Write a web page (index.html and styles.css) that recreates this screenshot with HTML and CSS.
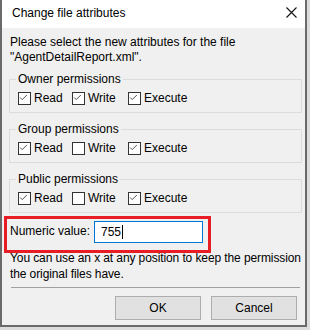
FILE: index.html
```html
<!DOCTYPE html>
<html lang="en">
<head>
    <meta charset="UTF-8">
    <title>Change file attributes</title>
    <link rel="stylesheet" href="styles.css">
</head>
<body>
    <div class="window">
        <div class="title-bar">
            <span class="title">Change file attributes</span>
            <svg class="close" width="11" height="11" viewBox="0 0 11 11">
                <path d="M0.5 0.5 L10.5 10.5 M10.5 0.5 L0.5 10.5" stroke="#111" stroke-width="1.1" fill="none"/>
            </svg>
        </div>
        <div class="content">
            <p class="intro">Please select the new attributes for the file<br>"AgentDetailReport.xml".</p>

            <!-- Owner -->
            <fieldset class="group">
                <legend>Owner permissions</legend>
                <div class="checks">
                    <label class="check"><span class="box on"><svg viewBox="0 0 13 13"><path d="M2.5 6.5 L5 9 L10.5 3.5" /></svg></span>Read</label>
                    <label class="check"><span class="box on"><svg viewBox="0 0 13 13"><path d="M2.5 6.5 L5 9 L10.5 3.5" /></svg></span>Write</label>
                    <label class="check"><span class="box on"><svg viewBox="0 0 13 13"><path d="M2.5 6.5 L5 9 L10.5 3.5" /></svg></span>Execute</label>
                </div>
            </fieldset>

            <!-- Group -->
            <fieldset class="group">
                <legend>Group permissions</legend>
                <div class="checks">
                    <label class="check"><span class="box on"><svg viewBox="0 0 13 13"><path d="M2.5 6.5 L5 9 L10.5 3.5" /></svg></span>Read</label>
                    <label class="check"><span class="box"></span>Write</label>
                    <label class="check"><span class="box on"><svg viewBox="0 0 13 13"><path d="M2.5 6.5 L5 9 L10.5 3.5" /></svg></span>Execute</label>
                </div>
            </fieldset>

            <!-- Public -->
            <fieldset class="group">
                <legend>Public permissions</legend>
                <div class="checks">
                    <label class="check"><span class="box on"><svg viewBox="0 0 13 13"><path d="M2.5 6.5 L5 9 L10.5 3.5" /></svg></span>Read</label>
                    <label class="check"><span class="box"></span>Write</label>
                    <label class="check"><span class="box on"><svg viewBox="0 0 13 13"><path d="M2.5 6.5 L5 9 L10.5 3.5" /></svg></span>Execute</label>
                </div>
            </fieldset>

            <div class="numeric">
                <span class="numeric-label">Numeric value:</span>
                <div class="numeric-input"><span class="value">755</span><span class="caret"></span></div>
            </div>

            <p class="hint">You can use an x at any position to keep the permission<br>the original files have.</p>

            <div class="separator"></div>

            <div class="buttons">
                <button class="btn">OK</button>
                <button class="btn">Cancel</button>
            </div>
        </div>
    </div>
</body>
</html>
```

FILE: styles.css
```css
body {
    margin: 0;
    padding: 0;
    background-color: #dcdcdc;
    font-family: 'Liberation Sans', Arial, sans-serif;
    font-size: 12px;
    color: #000;
}

.window {
    width: 303px;
    height: 325px;
    background-color: #f0f0f0;
    border: 2px solid #6a6a6a;
    border-top: 0;
    overflow: hidden;
}

.title-bar {
    height: 28px;
    background-color: #ffffff;
    display: flex;
    align-items: center;
    justify-content: space-between;
    padding: 0 8px 0 10px;
}

.title {
    font-size: 12px;
    line-height: 15px;
    padding-bottom: 2px;
}

.close {
    display: block;
    margin-bottom: 3px;
}

.content {
    padding: 0 3px 0 7px;
}

.intro {
    margin: 7px 0 0 1px;
    line-height: 15px;
}

.group {
    margin: 7px 0 0 0;
    padding: 0 7px 6px 8px;
    border: 1px solid #dcdcdc;
    min-width: 0;
}

.group + .group {
    margin-top: 9px;
}

.group legend {
    padding: 0 2px;
    margin-left: -2px;
    line-height: 14px;
}

.checks {
    display: grid;
    grid-template-columns: 54px 56px auto;
    margin-top: 5px;
}

.check {
    display: flex;
    align-items: center;
    line-height: 15px;
}

.box {
    width: 11px;
    height: 11px;
    border: 1px solid #333;
    background-color: #fff;
    margin-right: 3px;
    display: flex;
}

.box svg {
    width: 11px;
    height: 11px;
    margin: -1px 0 0 -1px;
    overflow: visible;
}

.box svg path {
    fill: none;
    stroke: #333;
    stroke-width: 1;
}

.numeric {
    margin: 6px 0 0 -2px;
    width: 201px;
    height: 31px;
    outline: 3px solid #e81c24;
    display: flex;
    align-items: flex-start;
}

.numeric-label {
    margin: 5px 0 0 3px;
    line-height: 15px;
    width: 84px;
}

.numeric-input {
    margin-top: 2px;
    background-color: #fff;
    border: 1px solid #0078d7;
    display: flex;
    align-items: center;
    padding-left: 6px;
    box-sizing: border-box;
    width: 109px;
    height: 22px;
}

.caret {
    width: 1px;
    height: 14px;
    background-color: #000;
    margin-left: 1px;
}

.hint {
    margin: 0 0 0 1px;
    line-height: 16px;
    white-space: nowrap;
    letter-spacing: -0.1px;
}

.separator {
    margin: 5px 2px 0 2px;
    border-top: 1px solid #a0a0a0;
}

.buttons {
    display: flex;
    justify-content: flex-end;
    gap: 10px;
    margin-top: 8px;
    padding-right: 5px;
}

.btn {
    width: 86px;
    height: 24px;
    background-color: #e1e1e1;
    border: 1px solid #adadad;
    font-family: 'Liberation Sans', Arial, sans-serif;
    font-size: 12px;
    color: #000;
    padding: 0;
}
```
